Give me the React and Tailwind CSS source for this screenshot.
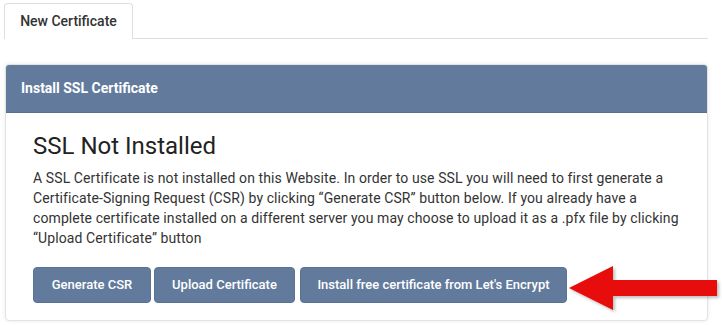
import React from 'react';

const font = { fontFamily: 'Roboto, "Liberation Sans", sans-serif' };

export default function App() {
  return (
    <div className="relative w-[722px] h-[325px] bg-white overflow-hidden" style={font}>
      <div className="ml-1 w-[704px] pt-[3px]">
        {/* Tabs */}
        <div className="flex border-b border-[#dedede]">
          <div className="w-[129px] h-[36px] -mb-px flex items-center justify-center bg-white border border-b-0 border-[#dedede] rounded-t-[4px] text-[14px] font-medium text-[#333]">
            New Certificate
          </div>
        </div>

        {/* Panel */}
        <div className="mt-[25px] ml-px border border-[#e3e3e3] rounded-[4px] shadow-[0_0_4px_rgba(0,0,0,0.08)] bg-white">
          <div className="h-[48px] flex items-center px-[15px] bg-[#627b9c] rounded-t-[3px] border-b border-[#56708f] text-[14px] font-bold text-white">
            Install SSL Certificate
          </div>
          <div className="px-[27px] pt-[19px] pb-[17px]">
            <h2 className="text-[24px] leading-[28px] text-[#222]">SSL Not Installed</h2>
            <p className="mt-2 -mr-3 text-[14px] leading-[20px] tracking-[0.1px] text-[#333]">
              A SSL Certificate is not installed on this Website. In order to use SSL you will need to first generate a<br />
              Certificate-Signing Request (CSR) by clicking “Generate CSR” button below. If you already have a<br />
              complete certificate installed on a different server you may choose to upload it as a .pfx file by clicking<br />
              “Upload Certificate” button
            </p>
            <div className="mt-[19px] flex">
              <button className="w-[118px] h-[36px] rounded-[4px] bg-[#627b9c] border border-[#5a7393] text-white text-[13px] font-medium">
                Generate CSR
              </button>
              <button className="ml-[3px] w-[141px] h-[36px] rounded-[4px] bg-[#627b9c] border border-[#5a7393] text-white text-[13px] font-medium">
                Upload Certificate
              </button>
              <button className="ml-[5px] w-[267px] h-[36px] rounded-[4px] bg-[#627b9c] border border-[#5a7393] text-white text-[13px] font-medium">
                Install free certificate from Let's Encrypt
              </button>
            </div>
          </div>
        </div>
      </div>

      {/* Annotation arrow */}
      <svg className="absolute left-[560px] top-[258px]" width="162" height="60" viewBox="0 0 162 60">
        <defs>
          <filter id="sh" x="-10%" y="-20%" width="130%" height="150%">
            <feDropShadow dx="2" dy="2" stdDeviation="1.5" floodColor="#000" floodOpacity="0.25" />
          </filter>
        </defs>
        <polygon
          points="9,30 53,8 53,22 157,22 157,38 53,38 53,52"
          fill="#e80808"
          filter="url(#sh)"
        />
      </svg>
    </div>
  );
}
